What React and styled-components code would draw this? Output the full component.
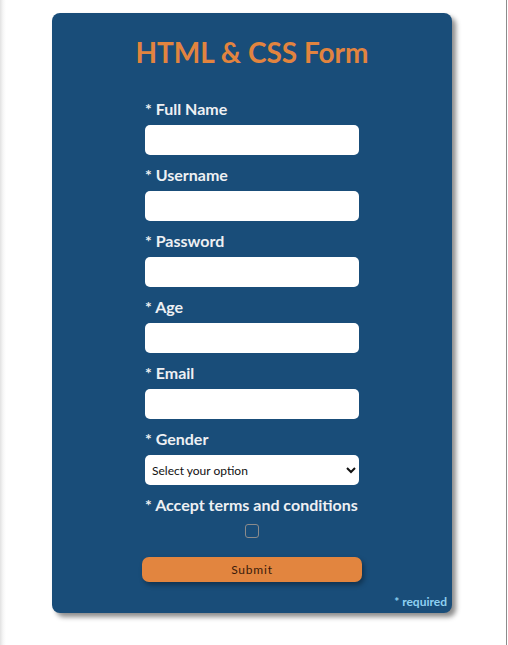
import styled, { createGlobalStyle } from 'styled-components';

const GlobalStyle = createGlobalStyle`
  html, body { margin: 0; padding: 0; background: #fff; }
  body { font-family: Lato, "Noto Sans", sans-serif; }
  * { box-sizing: border-box; }
`;

const fields = [
  { id: 'fullname', label: 'Full Name', type: 'text' },
  { id: 'username', label: 'Username', type: 'text' },
  { id: 'password', label: 'Password', type: 'password' },
  { id: 'age', label: 'Age', type: 'number' },
  { id: 'email', label: 'Email', type: 'email' },
];

export default function App() {
  return (
    <>
      <GlobalStyle />
      <Page>
        <Card>
          <Title>HTML &amp; CSS Form</Title>
          <Form onSubmit={(e) => e.preventDefault()}>
            {fields.map(f => (
              <Field key={f.id}>
                <Label htmlFor={f.id}>* {f.label}</Label>
                <Input id={f.id} type={f.type} />
              </Field>
            ))}
            <Field>
              <Label htmlFor="gender">* Gender</Label>
              <Select id="gender" defaultValue="">
                <option value="" disabled>Select your option</option>
                <option value="m">Male</option>
                <option value="f">Female</option>
              </Select>
            </Field>
            <Field>
              <Label htmlFor="terms">* Accept terms and conditions</Label>
              <Check id="terms" type="checkbox" />
            </Field>
            <SubmitBtn type="submit">Submit</SubmitBtn>
          </Form>
          <Required>* required</Required>
        </Card>
      </Page>
    </>
  );
}

/* ============ styles ============ */

const Page = styled.div`
  width: 507px;
  min-height: 100vh;
  padding: 13px 0 0 52px;
  border-right: 1px solid #8c8c8c;
  background: linear-gradient(to right, #e2e2e2 0, #f6f6f6 3px, #fff 6px);
`;

const Card = styled.section`
  width: 400px;
  height: 600px;
  background: #194d79;
  border-radius: 8px;
  box-shadow: 4px 4px 5px rgba(0,0,0,.45);
  display: flex;
  flex-direction: column;
  align-items: center;
  padding: 22px 5px 4px;
`;

const Title = styled.h1`
  margin: 0 0 30px;
  font-size: 28px;
  line-height: 34px;
  font-weight: 700;
  color: #e2843f;
`;

const Form = styled.form`
  width: 214px;
  display: flex;
  flex-direction: column;
  align-items: stretch;
`;

const Field = styled.div`
  display: flex;
  flex-direction: column;
  align-items: stretch;
  margin-bottom: 10px;
`;

const Label = styled.label`
  font-size: 16px;
  line-height: 19px;
  font-weight: 700;
  color: #eef0f3;
  margin-bottom: 7px;
  white-space: nowrap;
`;

const Input = styled.input`
  height: 30px;
  border: 0;
  border-radius: 5px;
  background: #fff;
  padding: 0 8px;
  font: inherit;
  font-size: 13px;
  outline: none;
`;

const Select = styled.select`
  height: 30px;
  border: 0;
  border-radius: 5px;
  background: #fff;
  padding: 0 3px;
  font-family: inherit;
  font-size: 12px;
  color: #111;
  outline: none;
`;

const Check = styled.input`
  appearance: none;
  align-self: center;
  width: 14px;
  height: 14px;
  margin: 3px 0 0;
  border: 1px solid #8b8b8b;
  border-radius: 3px;
  background: transparent;
`;

const SubmitBtn = styled.button`
  margin: 9px -3px 0;
  height: 25px;
  border: 0;
  border-radius: 7px;
  background: #e2853f;
  color: #3a1b0b;
  font-family: inherit;
  font-size: 12px;
  letter-spacing: .8px;
  font-weight: 400;
  box-shadow: 2px 3px 5px rgba(0,0,0,.35);
  cursor: pointer;
`;

const Required = styled.span`
  margin-top: auto;
  align-self: flex-end;
  font-size: 12px;
  font-weight: 700;
  color: #8fd0f0;
`;
